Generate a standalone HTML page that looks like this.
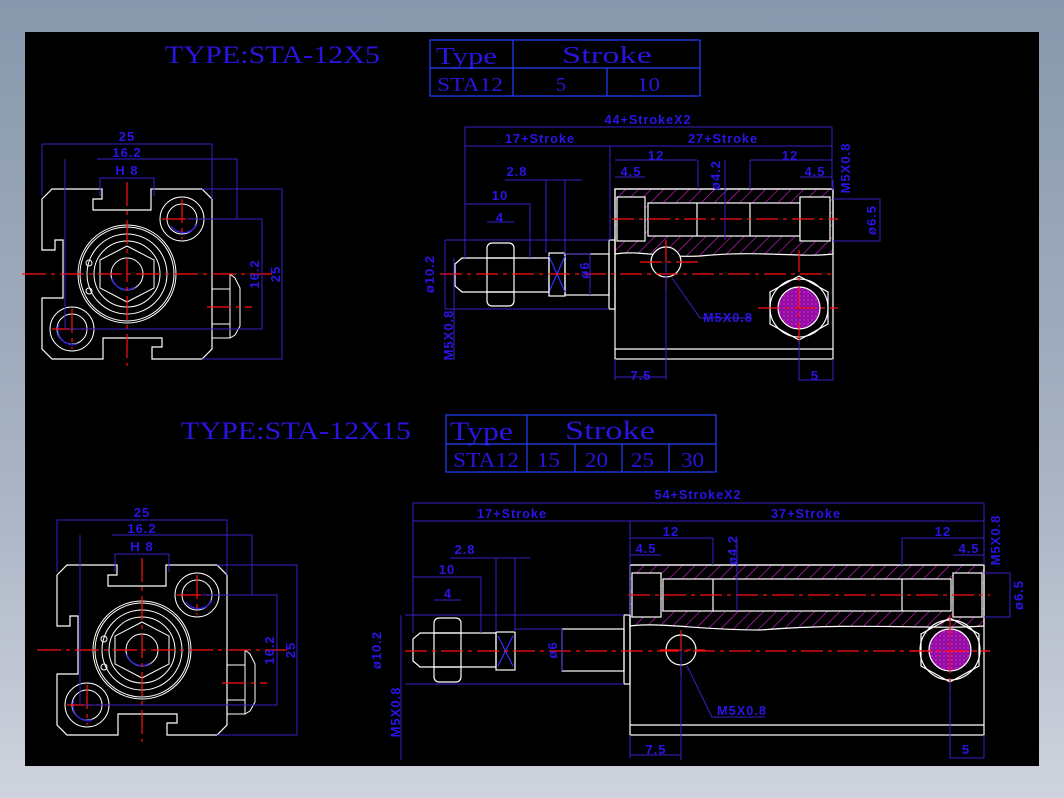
<!DOCTYPE html>
<html><head><meta charset="utf-8"><style>
html,body{margin:0;padding:0;width:1064px;height:798px;overflow:hidden;background:linear-gradient(#8898ac,#a9b3c4 60%,#cfd3dd);}
svg{display:block}
</style></head><body>
<svg width="1064" height="798" viewBox="0 0 1064 798" xmlns="http://www.w3.org/2000/svg">
<defs>
<pattern id="h" width="9" height="9" patternUnits="userSpaceOnUse" patternTransform="rotate(45)">
<rect width="9" height="9" fill="#000"/><line x1="0" y1="0" x2="0" y2="9" stroke="#e020e0" stroke-width="1.2"/></pattern>
<pattern id="m" width="4" height="4" patternUnits="userSpaceOnUse">
<rect width="4" height="4" fill="#d018d8"/><circle cx="2" cy="2" r="1.3" fill="none" stroke="#5a0870" stroke-width="0.8"/></pattern>
<g id="front">
<path d="M-85,-75 L-75,-85 L-25,-85 L-25,-75 L-34,-75 L-34,-64 L24,-64 L24,-85 L75,-85 L85,-75 L85,75 L75,85 L25,85 L25,73 L35,73 L35,64 L-24,64 L-24,85 L-75,85 L-85,75 L-85,24 L-64,24 L-64,-34 L-72,-34 L-72,-24 L-85,-24 Z" fill="none" stroke="#fff" stroke-width="1.2"/>
<circle r="49" fill="none" stroke="#fff"/><circle r="47" fill="none" stroke="#fff"/>
<circle r="40" fill="none" stroke="#fff"/><circle r="33" fill="none" stroke="#fff"/>
<path d="M0,-28 L27,-14 L27,14 L0,28 L-27,14 L-27,-14 Z" fill="none" stroke="#fff"/>
<circle r="16" fill="none" stroke="#fff"/><path d="M-15,4 A15,15 0 0 0 8,13" fill="none" stroke="#3020d0" stroke-width="1.5"/>
<circle cx="-38" cy="-11" r="3" fill="none" stroke="#fff"/><circle cx="-38" cy="17" r="3" fill="none" stroke="#fff"/>
<circle cx="55" cy="-55" r="22" fill="none" stroke="#fff"/><circle cx="55" cy="-55" r="15" fill="none" stroke="#fff"/>
<path d="M44,-48 A15,15 0 0 0 70,-50" fill="none" stroke="#3020d0" stroke-width="1.5"/>
<circle cx="-55" cy="55" r="22" fill="none" stroke="#fff"/><circle cx="-55" cy="55" r="15" fill="none" stroke="#fff"/>
<path d="M-68,50 A15,15 0 0 0 -50,70" fill="none" stroke="#3020d0" stroke-width="1.5"/>
<path d="M85,0 L103,0 L103,64 L85,64 M103,0 L108,4 L113,14 L113,52 L108,61 L103,64 M85,15 H103 M85,50 H103" fill="none" stroke="#fff"/>
<g stroke="#ff1010" stroke-width="1.2" stroke-dasharray="24,5,4,5">
<line x1="-105" y1="0" x2="145" y2="0"/><line x1="0" y1="-92" x2="0" y2="92"/>
<line x1="35" y1="-55" x2="75" y2="-55"/><line x1="55" y1="-75" x2="55" y2="-35"/>
<line x1="-75" y1="55" x2="-35" y2="55"/><line x1="-55" y1="35" x2="-55" y2="75"/>
<line x1="80" y1="33" x2="125" y2="33"/></g>
<g stroke="#3820c8" fill="none">
<path d="M-85,-78 V-130 H85 V-75 M-30,-115 H110 V-55 M-27,-78 V-96 H27 V-78"/>
<path d="M75,-85 H155 V85 H75 M60,-55 H135 V55 H-58"/>
<path d="M-62,-115 V55"/>
</g>
<g fill="#2a14e8" font-family="Liberation Sans,sans-serif" font-size="13" font-weight="bold" letter-spacing="1">
<text x="0" y="-133" text-anchor="middle">25</text>
<text x="0" y="-117" text-anchor="middle">16.2</text>
<text x="0" y="-99" text-anchor="middle">H 8</text>
<text transform="translate(132,0) rotate(-90)" text-anchor="middle">16.2</text>
<text transform="translate(153,0) rotate(-90)" text-anchor="middle">25</text>
</g>
</g>
</defs>
<rect x="25" y="32" width="1014" height="734" fill="#000"/>

<g fill="#2a14e0" font-family="Liberation Serif,serif" lengthAdjust="spacingAndGlyphs">
<text x="165" y="63" font-size="25" textLength="215" lengthAdjust="spacingAndGlyphs">TYPE:STA-12X5</text>
<text x="181" y="439" font-size="25" textLength="230" lengthAdjust="spacingAndGlyphs">TYPE:STA-12X15</text>
<text x="436" y="64" font-size="24" textLength="61" lengthAdjust="spacingAndGlyphs">Type</text><text x="562" y="63" font-size="24" textLength="90" lengthAdjust="spacingAndGlyphs">Stroke</text>
<text x="437" y="91" font-size="20" textLength="66" lengthAdjust="spacingAndGlyphs">STA12</text><text x="556" y="91" font-size="20">5</text><text x="637" y="91" font-size="20" textLength="23" lengthAdjust="spacingAndGlyphs">10</text>
<text x="450" y="440" font-size="26" textLength="63" lengthAdjust="spacingAndGlyphs">Type</text><text x="565" y="439" font-size="26" textLength="90" lengthAdjust="spacingAndGlyphs">Stroke</text>
<text x="453" y="467" font-size="21" textLength="66" lengthAdjust="spacingAndGlyphs">STA12</text><text x="537" y="467" font-size="21" textLength="23" lengthAdjust="spacingAndGlyphs">15</text><text x="585" y="467" font-size="21" textLength="23" lengthAdjust="spacingAndGlyphs">20</text><text x="631" y="467" font-size="21" textLength="23" lengthAdjust="spacingAndGlyphs">25</text><text x="681" y="467" font-size="21" textLength="23" lengthAdjust="spacingAndGlyphs">30</text>
</g>
<g stroke="#2040ff" fill="none" stroke-width="1.2">
<rect x="430" y="40" width="270" height="56"/><path d="M430,68 H700 M513,40 V96 M607,68 V96"/>
<rect x="446" y="415" width="270" height="57"/><path d="M446,444 H716 M527,415 V472 M575,444 V472 M622,444 V472 M669,444 V472"/>
</g>

<use href="#front" x="127" y="274"/>
<use href="#front" x="142" y="650"/>

<g stroke="#fff" fill="none" stroke-width="1.2">
<path d="M615,189 H833 V254 C800,258 760,250 700,256 C660,258 640,250 615,254 Z" fill="url(#h)"/>
<rect x="615" y="189" width="218" height="170"/><line x1="615" y1="349" x2="833" y2="349"/>
<rect x="648" y="203" width="152" height="33" fill="#000"/>
<rect x="617" y="197" width="28" height="44" fill="#000"/><rect x="800" y="197" width="30" height="44" fill="#000"/>
<line x1="697" y1="203" x2="697" y2="236"/><line x1="750" y1="203" x2="750" y2="236"/>
<rect x="609" y="240" width="6" height="69"/><rect x="565" y="254" width="44" height="41"/>
<rect x="549" y="253" width="16" height="43"/><path d="M549,256 L565,292 M565,256 L549,292" stroke="#3030ff"/>
<path d="M462,258 H549 V292 H462 L455,286 V264 Z"/>
<rect x="487" y="243" width="27" height="63" rx="5"/><path d="M487,258 H514 M487,292 H514"/>
<circle cx="666" cy="262" r="15" fill="#000"/>
<path d="M799,276 L828,292 L828,324 L799,340 L770,324 L770,292 Z"/><circle cx="799" cy="308" r="29"/><circle cx="799" cy="308" r="21" fill="url(#m)"/>
</g>
<g stroke="#ff1010" stroke-width="1.2" stroke-dasharray="22,5,4,5">
<line x1="612" y1="219" x2="838" y2="219"/><line x1="440" y1="274" x2="836" y2="274"/>
<line x1="640" y1="262" x2="700" y2="262"/><line x1="666" y1="240" x2="666" y2="290"/>
<line x1="758" y1="308" x2="838" y2="308"/><line x1="799" y1="250" x2="799" y2="345"/>
</g>
<g stroke="#3820c8" fill="none">
<path d="M465,127 H832 M465,146 H832 M465,127 V258 M832,127 V189 M610,146 V240 M615,160 H697 M615,177 H645 M750,160 H832 M800,177 H832 M698,160 V189 M750,160 V189"/>
<path d="M465,204 H530 V258 M487,222 H514 M445,240 H609 M445,309 H609 M445,240 V309 M454,258 V360 M505,180 H582 M546,180 V253 M565,180 V254 M565,254 H590 V295"/>
<path d="M833,180 V190 M833,199 H880 V241 H833 M725,160 V240 M666,262 V380 M615,359 V380 M615,377 H666 M799,340 V380 H833 V359 M672,278 L700,318 H752"/>
</g>
<g fill="#2a14e8" font-family="Liberation Sans,sans-serif" font-size="13" font-weight="bold" letter-spacing="1">
<text x="648" y="124" text-anchor="middle" textLength="87" lengthAdjust="spacingAndGlyphs">44+StrokeX2</text>
<text x="540" y="143" text-anchor="middle" textLength="70" lengthAdjust="spacingAndGlyphs">17+Stroke</text><text x="723" y="143" text-anchor="middle" textLength="70" lengthAdjust="spacingAndGlyphs">27+Stroke</text>
<text x="656" y="160" text-anchor="middle">12</text><text x="790" y="160" text-anchor="middle">12</text>
<text x="631" y="176" text-anchor="middle">4.5</text><text x="815" y="176" text-anchor="middle">4.5</text>
<text x="517" y="176" text-anchor="middle">2.8</text><text x="500" y="200" text-anchor="middle">10</text><text x="500" y="222" text-anchor="middle">4</text>
<text x="703" y="322" textLength="50" lengthAdjust="spacingAndGlyphs">M5X0.8</text><text x="641" y="380" text-anchor="middle">7.5</text><text x="815" y="380" text-anchor="middle">5</text>
<text transform="translate(434,274) rotate(-90)" text-anchor="middle">ø10.2</text>
<text transform="translate(453,335) rotate(-90)" text-anchor="middle">M5X0.8</text>
<text transform="translate(589,270) rotate(-90)" text-anchor="middle">ø6</text>
<text transform="translate(720,175) rotate(-90)" text-anchor="middle">ø4.2</text>
<text transform="translate(850,168) rotate(-90)" text-anchor="middle">M5X0.8</text>
<text transform="translate(876,220) rotate(-90)" text-anchor="middle">ø6.5</text>
</g>

<g stroke="#fff" fill="none" stroke-width="1.2">
<path d="M630,565 H984 V626 C930,630 860,622 760,630 C700,630 660,622 630,626 Z" fill="url(#h)"/>
<rect x="630" y="565" width="354" height="170"/><line x1="630" y1="725" x2="984" y2="725"/>
<rect x="663" y="579" width="288" height="32" fill="#000"/>
<rect x="632" y="573" width="29" height="44" fill="#000"/><rect x="953" y="573" width="29" height="44" fill="#000"/>
<line x1="713" y1="579" x2="713" y2="611"/><line x1="902" y1="579" x2="902" y2="611"/>
<rect x="624" y="615" width="6" height="69"/><rect x="562" y="629" width="62" height="42"/>
<rect x="496" y="632" width="19" height="38"/><path d="M498,636 L513,666 M513,636 L498,666" stroke="#3030ff"/>
<path d="M420,633 H496 V667 H420 L413,661 V639 Z"/>
<rect x="434" y="618" width="27" height="64" rx="5"/><path d="M434,633 H461 M434,667 H461"/>
<circle cx="681" cy="650" r="15" fill="#000"/>
<path d="M950,618 L979,634 L979,666 L950,682 L921,666 L921,634 Z"/><circle cx="950" cy="650" r="30"/><circle cx="950" cy="650" r="21" fill="url(#m)"/>
</g>
<g stroke="#ff1010" stroke-width="1.2" stroke-dasharray="22,5,4,5">
<line x1="628" y1="595" x2="990" y2="595"/><line x1="405" y1="651" x2="990" y2="651"/>
<line x1="660" y1="650" x2="705" y2="650"/><line x1="681" y1="630" x2="681" y2="675"/>
<line x1="910" y1="651" x2="990" y2="651"/><line x1="950" y1="615" x2="950" y2="690"/>
</g>
<g stroke="#3820c8" fill="none">
<path d="M413,503 H984 M413,521 H984 M413,503 V633 M984,503 V565 M630,521 V615 M630,538 H713 M630,555 H661 M902,538 H984 M953,555 H984 M713,538 V565 M902,538 V565"/>
<path d="M413,577 H481 V633 M434,600 H461 M405,615 H624 M405,684 H624 M401,615 V760 M450,558 H530 M496,558 V632 M515,558 V632 M515,629 H562 M562,629 V671"/>
<path d="M984,555 V565 M984,573 H1010 V617 H984 M737,540 V611 M681,650 V760 M630,735 V758 M630,755 H681 M950,682 V758 H984 V735 M687,666 L712,717 H765"/>
</g>
<g fill="#2a14e8" font-family="Liberation Sans,sans-serif" font-size="13" font-weight="bold" letter-spacing="1">
<text x="698" y="499" text-anchor="middle" textLength="87" lengthAdjust="spacingAndGlyphs">54+StrokeX2</text>
<text x="512" y="518" text-anchor="middle" textLength="70" lengthAdjust="spacingAndGlyphs">17+Stroke</text><text x="806" y="518" text-anchor="middle" textLength="70" lengthAdjust="spacingAndGlyphs">37+Stroke</text>
<text x="671" y="536" text-anchor="middle">12</text><text x="943" y="536" text-anchor="middle">12</text>
<text x="646" y="553" text-anchor="middle">4.5</text><text x="969" y="553" text-anchor="middle">4.5</text>
<text x="465" y="554" text-anchor="middle">2.8</text><text x="447" y="574" text-anchor="middle">10</text><text x="448" y="598" text-anchor="middle">4</text>
<text x="717" y="715" textLength="50" lengthAdjust="spacingAndGlyphs">M5X0.8</text><text x="656" y="754" text-anchor="middle">7.5</text><text x="966" y="754" text-anchor="middle">5</text>
<text transform="translate(381,650) rotate(-90)" text-anchor="middle">ø10.2</text>
<text transform="translate(400,712) rotate(-90)" text-anchor="middle">M5X0.8</text>
<text transform="translate(557,650) rotate(-90)" text-anchor="middle">ø6</text>
<text transform="translate(737,550) rotate(-90)" text-anchor="middle">ø4.2</text>
<text transform="translate(1000,540) rotate(-90)" text-anchor="middle">M5X0.8</text>
<text transform="translate(1023,595) rotate(-90)" text-anchor="middle">ø6.5</text>
</g>
</svg>
</body></html>
